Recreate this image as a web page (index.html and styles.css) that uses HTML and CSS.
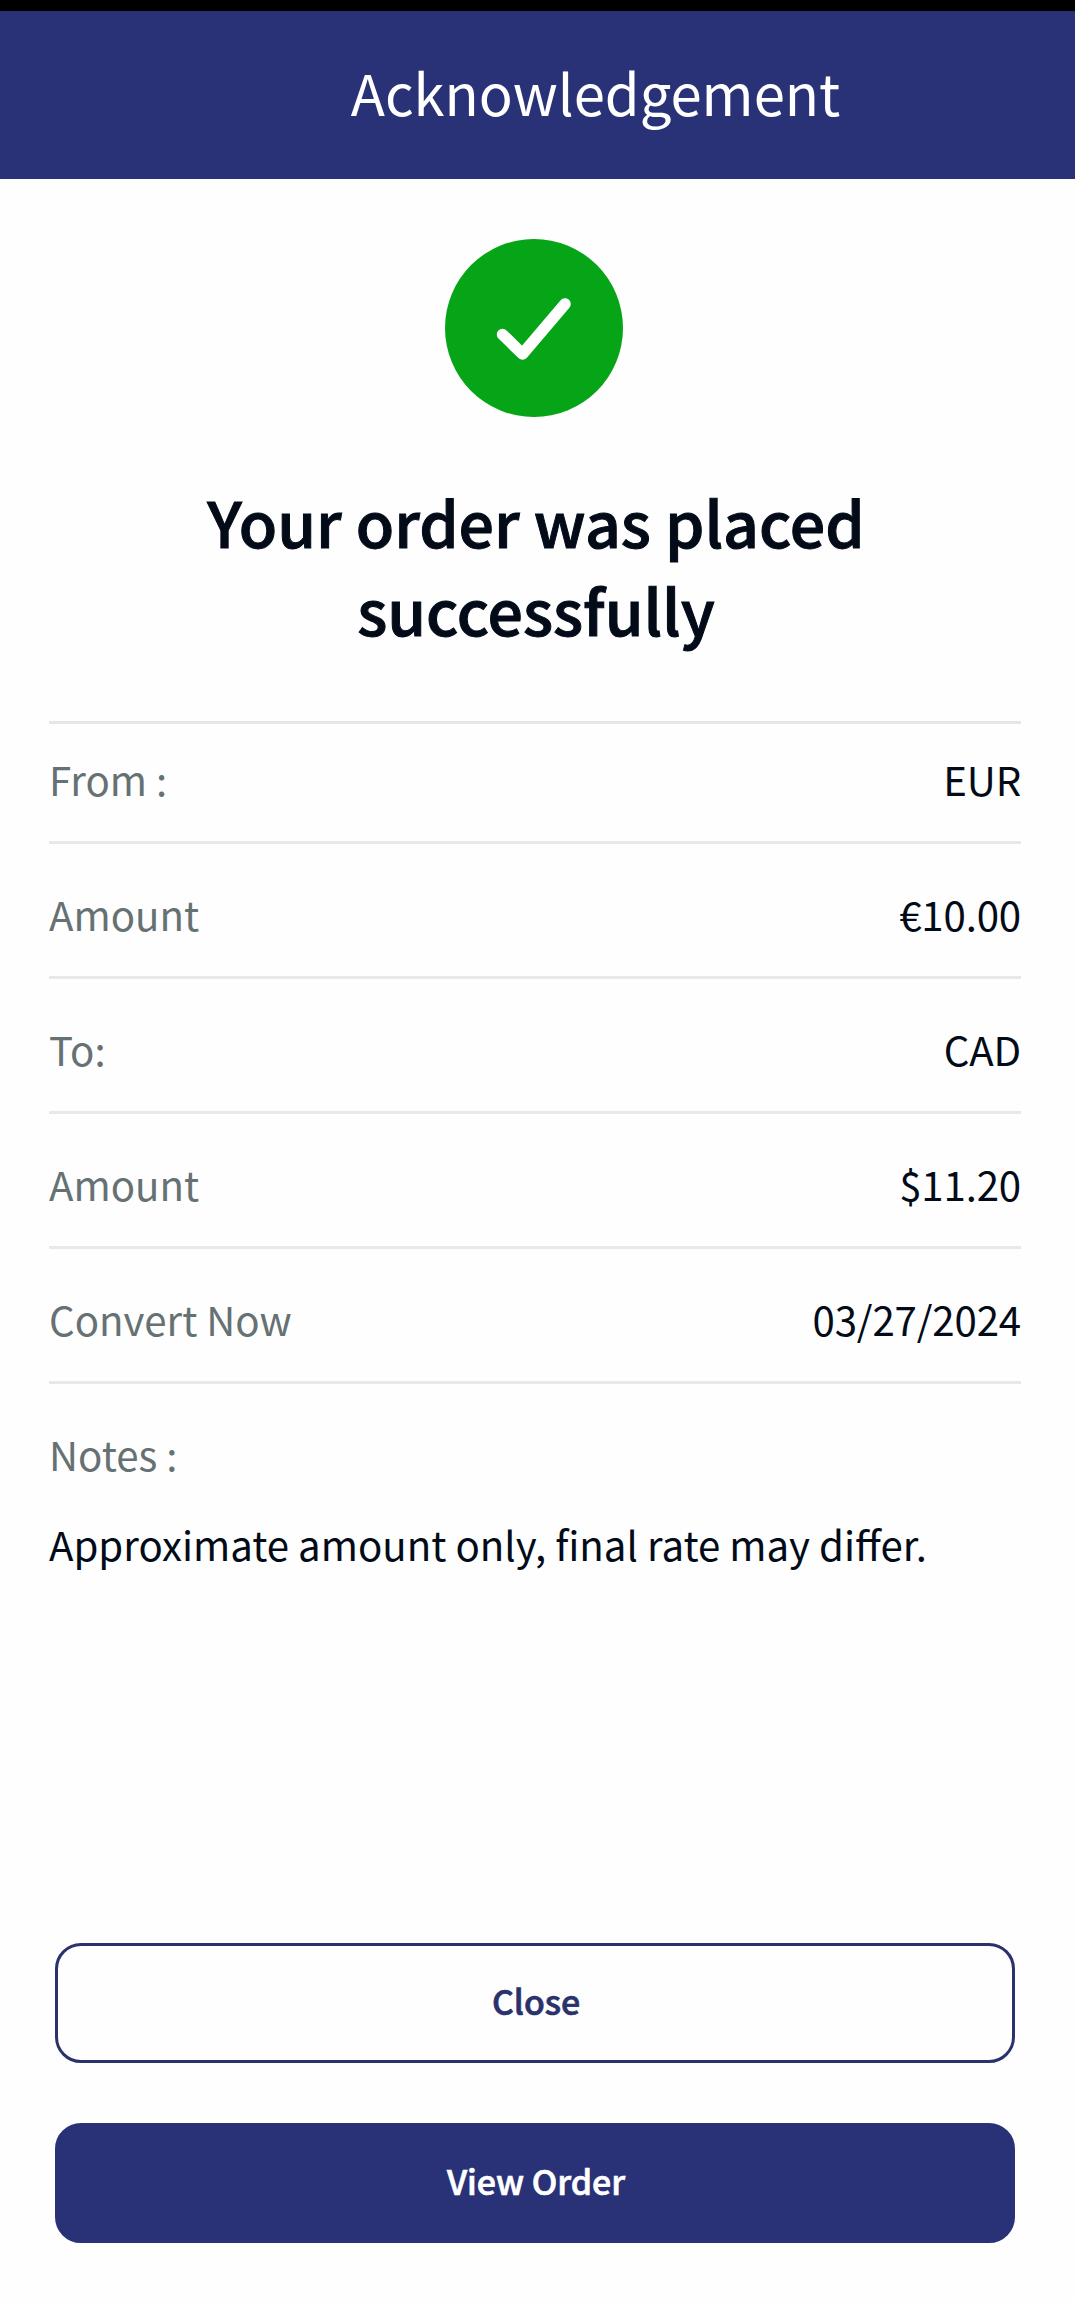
FILE: index.html
```html
<!DOCTYPE html>
<html lang="en">
<head>
<meta charset="utf-8">
<title>Acknowledgement</title>
<link rel="stylesheet" href="styles.css">
</head>
<body>
<header class="header"><h1 class="header-title">Acknowledgement</h1></header>
<main class="content">
  <svg class="success-icon" viewBox="0 0 178 178" aria-hidden="true">
    <circle cx="89" cy="89" r="89" fill="#06a517"/>
    <path d="M57.5 95.5L77.5 115L120 65" fill="none" stroke="#fff" stroke-width="11.5" stroke-linecap="round" stroke-linejoin="round"/>
  </svg>
  <h2 class="message">Your order was placed<br>successfully</h2>
  <dl class="details">
    <div class="row row-first"><dt>From :</dt><dd>EUR</dd></div>
    <div class="row"><dt>Amount</dt><dd>€10.00</dd></div>
    <div class="row"><dt>To:</dt><dd>CAD</dd></div>
    <div class="row"><dt>Amount</dt><dd>$11.20</dd></div>
    <div class="row"><dt>Convert Now</dt><dd>03/27/2024</dd></div>
  </dl>
  <section class="notes">
    <h3 class="notes-label">Notes :</h3>
    <p class="notes-text">Approximate amount only, final rate may differ.</p>
  </section>
  <div class="actions">
    <button class="button button-outline">Close</button>
    <button class="button button-primary">View Order</button>
  </div>
</main>
</body>
</html>
```
FILE: styles.css
```css
* { box-sizing: border-box; margin: 0; padding: 0; }
body {
  background: #fefefe;
  color: #020b17;
  font-family: "Noto Sans CJK SC", "Noto Sans", sans-serif;
  font-size: 40.2px;
  border-top: 11px solid #000;
  height: 2303px;
  display: flex;
  flex-direction: column;
}
.header {
  height: 168px;
  background: #293276;
  color: #fff;
  padding: 0 0 7px 116px;
  display: flex;
  align-items: center;
  justify-content: center;
}
.header-title { font-size: 56.2px; line-height: 80px; font-weight: 400; }
.content {
  flex: 1;
  padding: 60px 54px 60px 49px;
  display: flex;
  flex-direction: column;
}
.success-icon {
  width: 178px;
  height: 178px;
  align-self: center;
  margin-right: 2px;
}
.message {
  margin-top: 60px;
  padding-left: 2px;
  text-align: center;
  font-size: 62.6px;
  line-height: 88px;
  font-weight: 500;
  -webkit-text-stroke: 1px currentColor;
}
.details { margin-top: 68px; border-top: 3px solid #e4e7ea; }
.row {
  height: 135px;
  padding-top: 8px;
  display: flex;
  align-items: center;
  justify-content: space-between;
  border-bottom: 3px solid #e7e8e9;
  line-height: 60px;
}
.row-first { height: 120px; padding: 0 0 7px; }
.row dt, .notes-label { color: #667173; }
.row dd { letter-spacing: -0.15px; }
.notes { padding-top: 40px; }
.notes-label { font-size: 40.2px; font-weight: 400; line-height: 60px; }
.notes-text { margin-top: 30px; line-height: 60px; }
.actions {
  margin-top: auto;
  padding: 0 6px;
  display: flex;
  flex-direction: column;
  gap: 60px;
}
.button {
  height: 120px;
  padding: 0 0 5px 2px;
  border: 3px solid #293276;
  border-radius: 26px;
  font: 500 33.9px/50px "Noto Sans CJK SC", "Noto Sans", sans-serif;
  -webkit-text-stroke: 0.7px currentColor;
}
.button-outline { background: #fefefe; color: #2b316c; border-color: #2b316c; }
.button-primary { background: #293276; color: #fff; }
```
